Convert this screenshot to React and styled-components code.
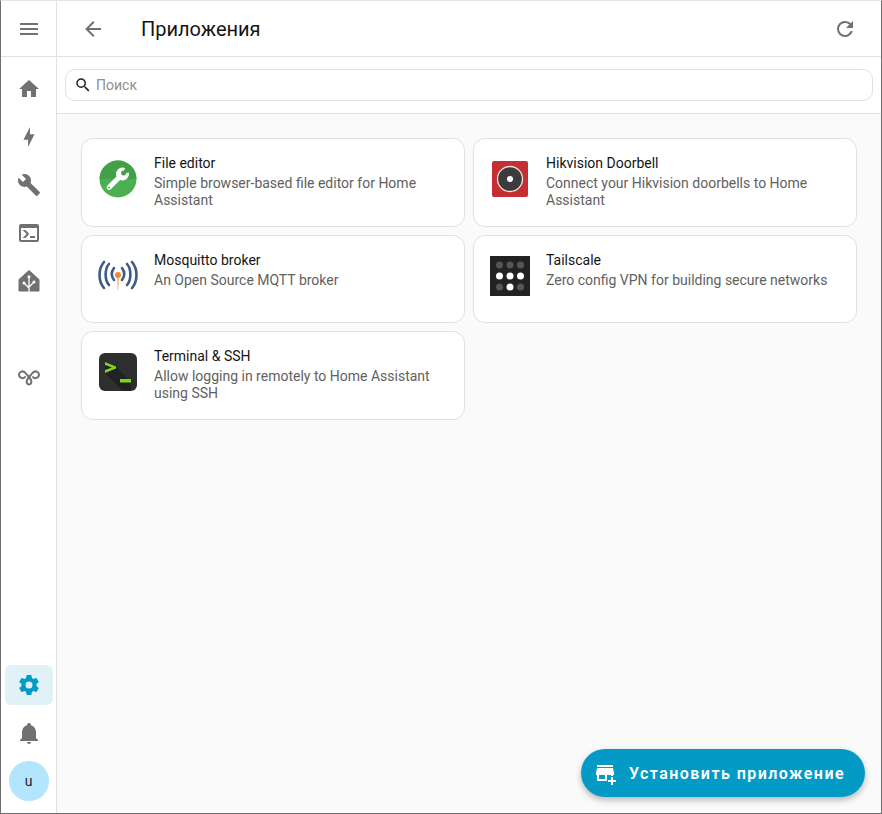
import styled, { createGlobalStyle } from 'styled-components'

const GlobalStyle = createGlobalStyle`
  html, body {
    margin: 0;
    padding: 0;
    height: 100%;
  }
  body {
    font-family: Roboto, "Liberation Sans", sans-serif;
    background: #fafafa;
  }
  #root {
    height: 100%;
  }
`

const Shell = styled.div`
  display: flex;
  height: 814px;
  box-sizing: border-box;
  border-left: 1px solid #6f6f6f;
  border-right: 1px solid #6f6f6f;
  border-bottom: 1px solid #6f6f6f;
  border-top: 1px solid #e4e4e4;
  overflow: hidden;
`

const Sidebar = styled.aside`
  width: 56px;
  box-sizing: border-box;
  flex: none;
  display: flex;
  flex-direction: column;
  align-items: center;
  background: #fff;
  border-right: 1px solid #e0e0e0;
`

const SideTop = styled.div`
  height: 55px;
  width: 100%;
  flex: none;
  display: flex;
  align-items: center;
  justify-content: center;
  border-bottom: 1px solid #e0e0e0;
`

const SideList = styled.nav`
  display: flex;
  flex-direction: column;
  align-items: center;
  padding-top: 12px;
`

const SideItem = styled.div`
  width: 48px;
  height: 40px;
  margin-bottom: 8px;
  display: flex;
  align-items: center;
  justify-content: center;
  border-radius: 6px;
  background: ${props => props.active ? '#e0f2f8' : 'transparent'};
`

const Spacer = styled.div`
  height: ${props => props.size}px;
  flex: ${props => props.size ? 'none' : '1'};
`

const Avatar = styled.div`
  width: 40px;
  height: 40px;
  margin-bottom: 12px;
  border-radius: 50%;
  background: #b3e5fc;
  color: #212121;
  font-size: 14px;
  display: flex;
  align-items: center;
  justify-content: center;
`

const Main = styled.main`
  flex: 1;
  min-width: 0;
  display: flex;
  flex-direction: column;
  position: relative;
`

const Header = styled.header`
  height: 55px;
  flex: none;
  display: flex;
  align-items: center;
  padding: 0 24px;
  background: #fff;
  border-bottom: 1px solid #e0e0e0;
`

const Title = styled.h1`
  flex: 1;
  margin: 0 0 0 36px;
  font-size: 20px;
  font-weight: 400;
  color: #141414;
`

const SearchBar = styled.div`
  height: 57px;
  flex: none;
  box-sizing: border-box;
  padding: 12px 8px;
  background: #fff;
  border-bottom: 1px solid #e0e0e0;
`

const SearchBox = styled.div`
  height: 32px;
  box-sizing: border-box;
  display: flex;
  align-items: center;
  gap: 4px;
  padding-left: 8px;
  border: 1px solid #e0e0e0;
  border-radius: 10px;
  color: #8f8f8f;
  font-size: 14px;
`

const Grid = styled.div`
  display: grid;
  grid-template-columns: 1fr 1fr;
  grid-auto-rows: 88.5px;
  gap: 8px;
  padding: 24px 24px 0;
`

const Card = styled.article`
  box-sizing: border-box;
  display: flex;
  align-items: flex-start;
  padding: 16px 16px 0 16px;
  background: #fff;
  border: 1px solid #e0e0e0;
  border-radius: 12px;
`

const CardIcon = styled.div`
  width: 40px;
  height: 40px;
  flex: none;
  margin-top: 4px;
  display: flex;
  align-items: center;
  justify-content: center;
`

const CardText = styled.div`
  margin-left: 16px;
  min-width: 0;
`

const CardTitle = styled.div`
  font-size: 14px;
  line-height: 17px;
  color: #141414;
`

const CardDesc = styled.div`
  font-size: 14px;
  line-height: 17px;
  color: #616161;
  margin-top: 3px;
`

const Fab = styled.button`
  position: absolute;
  right: 16px;
  bottom: 16px;
  height: 48px;
  display: flex;
  align-items: center;
  gap: 12px;
  padding: 0 20px 0 12px;
  border: none;
  border-radius: 24px;
  background: #039bc6;
  color: #fff;
  font-family: inherit;
  font-size: 16px;
  font-weight: 600;
  letter-spacing: 1.45px;
  box-shadow: 0 3px 6px rgba(0, 0, 0, 0.28);
`

const Svg = styled.svg`
  width: ${props => props.size || 24}px;
  height: ${props => props.size || 24}px;
  flex: none;
  display: block;
  fill: ${props => props.color || '#717171'};
`

const Icon = ({ d, size, color }) => (
  <Svg viewBox="0 0 24 24" size={size} color={color}><path d={d} /></Svg>
)

const ICONS = {
  menu: 'M3,6H21V8H3V6M3,11H21V13H3V11M3,16H21V18H3V16Z',
  back: 'M20,11V13H8L13.5,18.5L12.08,19.92L4.16,12L12.08,4.08L13.5,5.5L8,11H20Z',
  refresh: 'M17.65,6.35C16.2,4.9 14.21,4 12,4A8,8 0 0,0 4,12A8,8 0 0,0 12,20C15.73,20 18.84,17.45 19.73,14H17.65C16.83,16.33 14.61,18 12,18A6,6 0 0,1 6,12A6,6 0 0,1 12,6C13.66,6 15.14,6.69 16.22,7.78L13,11H20V4L17.65,6.35Z',
  search: 'M9.5,3A6.5,6.5 0 0,1 16,9.5C16,11.11 15.41,12.59 14.44,13.73L14.71,14H15.5L20.5,19L19,20.5L14,15.5V14.71L13.73,14.44C12.59,15.41 11.11,16 9.5,16A6.5,6.5 0 0,1 3,9.5A6.5,6.5 0 0,1 9.5,3M9.5,5C7,5 5,7 5,9.5C5,12 7,14 9.5,14C12,14 14,12 14,9.5C14,7 12,5 9.5,5Z',
  home: 'M10,20V14H14V20H19V12H22L12,3L2,12H5V20H10Z',
  bolt: 'M11 15H6L13 1V9H18L11 23V15Z',
  wrench: 'M22.7,19L13.6,9.9C14.5,7.6 14,4.9 12.1,3C10.1,1 7.1,0.6 4.7,1.7L9,6L6,9L1.6,4.7C0.4,7.1 0.9,10.1 2.9,12.1C4.8,14 7.5,14.5 9.8,13.6L18.9,22.7C19.3,23.1 19.9,23.1 20.3,22.7L22.6,20.4C23.1,20 23.1,19.3 22.7,19Z',
  console: 'M20,19V7H4V19H20M20,3A2,2 0 0,1 22,5V19A2,2 0 0,1 20,21H4A2,2 0 0,1 2,19V5C2,3.89 2.9,3 4,3H20M13,17V15H18V17H13M9.58,13L5.57,9H8.4L11.7,12.3C12.09,12.69 12.09,13.33 11.7,13.72L8.42,17H5.59L9.58,13Z',
  cog: 'M12,15.5A3.5,3.5 0 0,1 8.5,12A3.5,3.5 0 0,1 12,8.5A3.5,3.5 0 0,1 15.5,12A3.5,3.5 0 0,1 12,15.5M19.43,12.97C19.47,12.65 19.5,12.33 19.5,12C19.5,11.67 19.47,11.34 19.43,11L21.54,9.37C21.73,9.22 21.78,8.95 21.66,8.73L19.66,5.27C19.54,5.05 19.27,4.96 19.05,5.05L16.56,6.05C16.04,5.66 15.5,5.32 14.87,5.07L14.5,2.42C14.46,2.18 14.25,2 14,2H10C9.75,2 9.54,2.18 9.5,2.42L9.13,5.07C8.5,5.32 7.96,5.66 7.44,6.05L4.95,5.05C4.73,4.96 4.46,5.05 4.34,5.27L2.34,8.73C2.21,8.95 2.27,9.22 2.46,9.37L4.57,11C4.53,11.34 4.5,11.67 4.5,12C4.5,12.33 4.53,12.65 4.57,12.97L2.46,14.63C2.27,14.78 2.21,15.05 2.34,15.27L4.34,18.73C4.46,18.95 4.73,19.03 4.95,18.95L7.44,17.94C7.96,18.34 8.5,18.68 9.13,18.93L9.5,21.58C9.54,21.82 9.75,22 10,22H14C14.25,22 14.46,21.82 14.5,21.58L14.87,18.93C15.5,18.67 16.04,18.34 16.56,17.94L19.05,18.95C19.27,19.03 19.54,18.95 19.66,18.73L21.66,15.27C21.78,15.05 21.73,14.78 21.54,14.63L19.43,12.97Z',
  bell: 'M21,19V20H3V19L5,17V11C5,7.9 7.03,5.17 10,4.29C10,4.19 10,4.1 10,4A2,2 0 0,1 12,2A2,2 0 0,1 14,4C14,4.1 14,4.19 14,4.29C16.97,5.17 19,7.9 19,11V17L21,19M14,21A2,2 0 0,1 12,23A2,2 0 0,1 10,21',
  store: 'M4 4h16v2H4V4zm16 3H4l-1 5v2h1v6h10v-6h4v1h2v-1h1v-2l-1-5zM6 18v-4h6v4H6zM18 16v3h-3v2h3v3h2v-3h3v-2h-3v-3h-2z',
}

const HouseIcon = () => (
  <svg width="24" height="24" viewBox="0 0 24 24">
    <path d="M12 1.500L22 10.500V22H2V10.500Z" fill="#717171" stroke="#717171" strokeLinejoin="round" />
    <path d="M12 8V23M7 14L12 19M17 13L12 18" fill="none" stroke="#fff" strokeWidth="1.300" />
    <circle cx="12" cy="7.800" r="1.500" fill="#fff" />
    <circle cx="7" cy="14" r="1.500" fill="#fff" />
    <circle cx="17" cy="13" r="1.500" fill="#fff" />
  </svg>
)

const KnotIcon = () => (
  <svg width="24" height="24" viewBox="0 0 24 24" fill="none" stroke="#717171" strokeWidth="2" strokeLinecap="round">
    <path d="M8 13C7 14.500 4.500 14.500 3 13C1.500 11.500 1.800 9 3.500 8C5.500 6.800 7.500 7.500 9 9.500C10.500 11.500 13 14 14 16C15 18 14 20.500 12 20.500C10 20.500 9 18 10 16C11 14 13.500 11.500 15 9.500C16.500 7.500 18.500 6.800 20.500 8C22.200 9 22.500 11.500 21 13C19.500 14.500 17 14.500 16 13" />
  </svg>
)

const WrenchBadge = () => (
  <svg width="38" height="38" viewBox="0 0 38 38">
    <circle cx="19" cy="19" r="18.500" fill="#4caf50" />
    <path d="M.5 19A18.500 18.500 0 0 1 37.500 19Z" fill="#43a047" />
    <path d="M10 27.500L21 16.500" stroke="#fff" strokeWidth="5" strokeLinecap="round" />
    <circle cx="23.500" cy="14" r="6.500" fill="#fff" />
    <path d="M24 14L27 5L33.500 11.500Z" fill="#43a047" />
    <circle cx="24.500" cy="13" r="2.500" fill="#43a047" />
    <circle cx="10" cy="27.500" r="1" fill="#4caf50" />
  </svg>
)

const HikvisionIcon = () => (
  <svg width="38" height="38" viewBox="0 0 38 38">
    <rect x="1" y="1" width="36" height="36" rx="2" fill="#c62f32" />
    <circle cx="19" cy="19" r="12.500" fill="#3c3c3c" stroke="#f0e4e4" strokeWidth="1.300" />
    <circle cx="19" cy="19" r="3" fill="#fff" />
  </svg>
)

const MosquittoIcon = () => (
  <svg width="40" height="40" viewBox="0 0 40 40" fill="none" stroke="#3f5a85" strokeWidth="2.600" strokeLinecap="round">
    <path d="M6 6C0 13 0 25 6 32" />
    <path d="M11 8C6.500 13 6.500 24 11 29" />
    <path d="M16 12C13 16 13 20 16 24" />
    <path d="M34 6C40 13 40 25 34 32" />
    <path d="M29 8C33.500 13 33.500 24 29 29" />
    <path d="M24 12C27 16 27 20 24 24" />
    <path d="M19 20H21L20.300 34H19.700Z" fill="#f3b27a" stroke="none" />
    <circle cx="20" cy="19" r="3" fill="#ee8a2c" stroke="none" />
  </svg>
)

const TailscaleIcon = () => (
  <svg width="40" height="40" viewBox="0 0 40 40">
    <rect width="40" height="40" fill="#222222" />
    {[[9.5, 9, 0], [20, 9, 0], [30.5, 9, 0], [9.5, 20, 1], [20, 20, 1], [30.5, 20, 1], [9.5, 31, 0], [20, 31, 1], [30.5, 31, 0]].map(([x, y, on]) => (
      <circle key={`${x}-${y}`} cx={x} cy={y} r="3.500" fill={on ? '#fff' : '#565553'} />
    ))}
  </svg>
)

const TerminalIcon = () => (
  <svg width="38" height="38" viewBox="0 0 38 38">
    <rect width="38" height="38" rx="6" fill="#2c2f2e" />
    <path d="M6 12L17 14L32 29L32 38H24L6 20Z" fill="#202221" />
    <path d="M6 9L17 13.500V15.500L6 20V17L13 14.500L6 12Z" fill="#7ed321" />
    <rect x="21" y="26" width="11" height="3.500" fill="#7ed321" />
  </svg>
)

const ADDONS = [
  { name: 'File editor', desc: 'Simple browser-based file editor for Home Assistant', icon: <WrenchBadge /> },
  { name: 'Hikvision Doorbell', desc: 'Connect your Hikvision doorbells to Home Assistant', icon: <HikvisionIcon /> },
  { name: 'Mosquitto broker', desc: 'An Open Source MQTT broker', icon: <MosquittoIcon /> },
  { name: 'Tailscale', desc: 'Zero config VPN for building secure networks', icon: <TailscaleIcon /> },
  { name: 'Terminal & SSH', desc: 'Allow logging in remotely to Home Assistant using SSH', icon: <TerminalIcon /> },
]

function App() {
  return (
    <>
      <GlobalStyle />
      <Shell>
        <Sidebar>
          <SideTop><Icon d={ICONS.menu} /></SideTop>
          <SideList>
            <SideItem><Icon d={ICONS.home} /></SideItem>
            <SideItem><Icon d={ICONS.bolt} size={22} /></SideItem>
            <SideItem><Icon d={ICONS.wrench} /></SideItem>
            <SideItem><Icon d={ICONS.console} /></SideItem>
            <SideItem><HouseIcon /></SideItem>
            <Spacer size={47} />
            <SideItem><KnotIcon /></SideItem>
          </SideList>
          <Spacer />
          <SideItem active><Icon d={ICONS.cog} color="#039bc6" /></SideItem>
          <SideItem><Icon d={ICONS.bell} /></SideItem>
          <Avatar>u</Avatar>
        </Sidebar>
        <Main>
          <Header>
            <Icon d={ICONS.back} />
            <Title>Приложения</Title>
            <Icon d={ICONS.refresh} />
          </Header>
          <SearchBar>
            <SearchBox>
              <Icon d={ICONS.search} size={18} color="#212121" />
              Поиск
            </SearchBox>
          </SearchBar>
          <Grid>
            {ADDONS.map(addon => (
              <Card key={addon.name}>
                <CardIcon>{addon.icon}</CardIcon>
                <CardText>
                  <CardTitle>{addon.name}</CardTitle>
                  <CardDesc>{addon.desc}</CardDesc>
                </CardText>
              </Card>
            ))}
          </Grid>
          <Fab>
            <Icon d={ICONS.store} color="#fff" />
            Установить приложение
          </Fab>
        </Main>
      </Shell>
    </>
  )
}

export default App
